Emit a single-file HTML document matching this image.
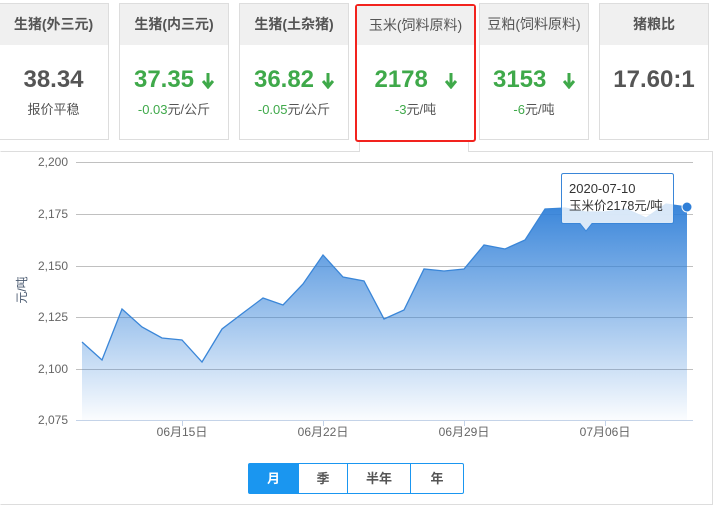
<!DOCTYPE html>
<html><head><meta charset="utf-8"><style>
*{margin:0;padding:0;box-sizing:border-box}
body{width:714px;height:506px;background:#fff;position:relative;overflow:hidden;font-family:"Liberation Sans","Noto Sans CJK SC",sans-serif}
.card{position:absolute;top:3px;height:137px;border:1px solid #ddd;background:#fff;text-align:center}
.card .h{height:41px;background:#f0f0f0;font-size:14px;font-weight:bold;color:#555;line-height:41px}
.card .v{margin-top:20px;font-size:24px;font-weight:bold;color:#555;height:30px;line-height:30px}
.card .v.g{color:#3fa94a}
.card .s{font-size:13px;color:#555;margin-top:4px}
.card .s i{font-style:normal;color:#3fa94a}
.arr{display:inline-block;margin-left:8px;vertical-align:middle}
.red{border:2px solid #f2231e;border-radius:3px;top:4px;height:138px}
.btns{position:absolute;left:248px;top:463px;width:216px;height:31px;border:1px solid #1a96f0;border-radius:2px;display:flex;font-size:13px;font-weight:bold;color:#555}
.btns div{text-align:center;line-height:29px;border-left:1px solid #1a96f0}
</style></head><body>
<div class="card" style="left:-2px;width:111px"><div class="h">生猪(外三元)</div><div class="v">38.34</div><div class="s">报价平稳</div></div>
<div class="card" style="left:119px;width:110px"><div class="h">生猪(内三元)</div><div class="v g">37.35<svg class="arr" width="12" height="16" viewBox="0 0 12 16"><path d="M6 0V12M1 8L6 14L11 8" stroke="#3fa94a" stroke-width="3" fill="none"/></svg></div><div class="s"><i>-0.03</i>元/公斤</div></div>
<div class="card" style="left:239px;width:110px"><div class="h">生猪(土杂猪)</div><div class="v g">36.82<svg class="arr" width="12" height="16" viewBox="0 0 12 16"><path d="M6 0V12M1 8L6 14L11 8" stroke="#3fa94a" stroke-width="3" fill="none"/></svg></div><div class="s"><i>-0.05</i>元/公斤</div></div>
<div style="position:absolute;left:359px;top:140px;width:110px;height:12px;border-left:1px solid #ddd;border-right:1px solid #ddd"></div>
<div class="card red" style="left:355px;width:121px"><div class="h" style="height:39px;line-height:39px;font-weight:normal;font-size:14px">玉米(饲料原料)</div><div class="v g">2178 <svg class="arr" width="12" height="16" viewBox="0 0 12 16" style="margin-left:10px"><path d="M6 0V12M1 8L6 14L11 8" stroke="#3fa94a" stroke-width="3" fill="none"/></svg></div><div class="s"><i>-3</i>元/吨</div></div>
<div class="card" style="left:479px;width:110px"><div class="h" style="font-weight:normal">豆粕(饲料原料)</div><div class="v g">3153 <svg class="arr" width="12" height="16" viewBox="0 0 12 16" style="margin-left:10px"><path d="M6 0V12M1 8L6 14L11 8" stroke="#3fa94a" stroke-width="3" fill="none"/></svg></div><div class="s"><i>-6</i>元/吨</div></div>
<div class="card" style="left:599px;width:110px"><div class="h">猪粮比</div><div class="v">17.60:1</div></div>
<svg style="position:absolute;left:0;top:0" width="714" height="506">
<defs><linearGradient id="g" x1="0" y1="0" x2="0" y2="1"><stop offset="0" stop-color="#2f7fd8" stop-opacity="0.95"/><stop offset="1" stop-color="#2f7fd8" stop-opacity="0.02"/></linearGradient></defs>
<path d="M0.5 151.5H359.5M468.5 151.5H712.5V504.5H0.5" stroke="#ddd" fill="none"/>
<g stroke="#c0c0c0" stroke-width="1">
<line x1="76" y1="162.5" x2="693" y2="162.5"/><line x1="76" y1="214.5" x2="693" y2="214.5"/><line x1="76" y1="266.5" x2="693" y2="266.5"/><line x1="76" y1="317.5" x2="693" y2="317.5"/><line x1="76" y1="369.5" x2="693" y2="369.5"/></g>
<line x1="76" y1="420.5" x2="693" y2="420.5" stroke="#c4d3e8"/>
<g stroke="#c4d3e8"><line x1="182.5" y1="420" x2="182.5" y2="426"/><line x1="323.5" y1="420" x2="323.5" y2="426"/><line x1="464.5" y1="420" x2="464.5" y2="426"/><line x1="605.5" y1="420" x2="605.5" y2="426"/></g>
<path d="M82 420L82 342L102 360L122 309L142 327L162 338L182 340L202 362L222 329L243 313L263 298L283 305L303 284L323 255L343 277L364 281L384 319L404 310L424 269L444 271L464 269L484 245L505 249L525 240L545 209L565 208L585 212L605 212L626 209L646 218L666 204L687 207L687 420Z" fill="url(#g)"/>
<path d="M82 342L102 360L122 309L142 327L162 338L182 340L202 362L222 329L243 313L263 298L283 305L303 284L323 255L343 277L364 281L384 319L404 310L424 269L444 271L464 269L484 245L505 249L525 240L545 209L565 208L585 212L605 212L626 209L646 218L666 204L687 207" fill="none" stroke="#3a86d8" stroke-width="1.3"/>
<circle cx="687" cy="207" r="5" fill="#2f7fd8" stroke="#fff" stroke-width="1"/>
<g font-size="12" fill="#666" text-anchor="end" font-family="Liberation Sans,sans-serif">
<text x="68" y="166">2,200</text><text x="68" y="218">2,175</text><text x="68" y="270">2,150</text><text x="68" y="321">2,125</text><text x="68" y="373">2,100</text><text x="68" y="424">2,075</text></g>
<g font-size="12" fill="#666" text-anchor="middle" font-family="Liberation Sans,Noto Sans CJK SC,sans-serif">
<text x="182" y="436">06月15日</text><text x="323" y="436">06月22日</text><text x="464" y="436">06月29日</text><text x="605" y="436">07月06日</text></g>
<text transform="translate(26,290) rotate(-90)" font-size="12" fill="#4a5a70" text-anchor="middle" font-family="Liberation Sans,Noto Sans CJK SC,sans-serif">元/吨</text>
<path d="M563.5 173.5H671.5Q673.5 173.5 673.5 175.5V221.5Q673.5 223.5 671.5 223.5H592L586 231L580 223.5H563.5Q561.5 223.5 561.5 221.5V175.5Q561.5 173.5 563.5 173.5Z" fill="#fff" fill-opacity="0.8" stroke="#3a86d8"/>
<text x="569" y="193" font-size="13" fill="#333" font-family="Liberation Sans,sans-serif">2020-07-10</text>
<text x="569" y="210" font-size="12.5" fill="#333" font-family="Liberation Sans,Noto Sans CJK SC,sans-serif">玉米价2178元/吨</text>
</svg>
<div class="btns"><div style="width:49px;border:none;background:#1a96f0;color:#fff">月</div><div style="width:49px">季</div><div style="width:63px">半年</div><div style="flex:1">年</div></div>
</body></html>
